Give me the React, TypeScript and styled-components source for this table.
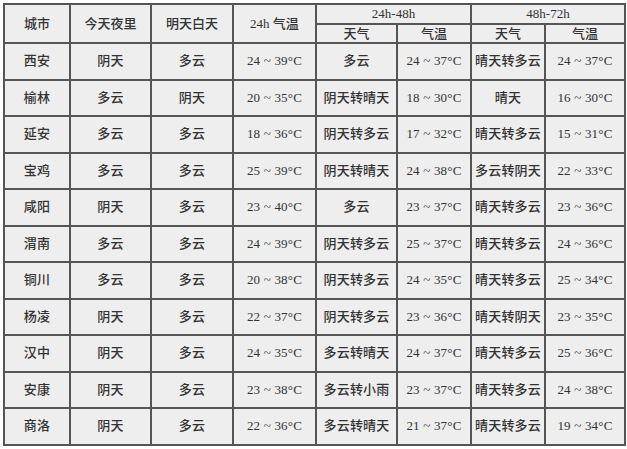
import React from 'react';
import styled, {createGlobalStyle} from 'styled-components';

const GlobalStyle = createGlobalStyle`
	html, body {
		margin: 0;
		padding: 0;
		background: #ffffff;
	}
`;

const Page = styled.div`
	padding: 3px 0 0 3px;
	width: 627px;
	height: 449px;
	box-sizing: border-box;
	background: #ffffff;
`;

const Table = styled.table`
	border-collapse: collapse;
	table-layout: fixed;
	width: 621px;
	background: #eeeeee;
	font-family: "Liberation Serif", "Noto Sans CJK SC", serif;
	font-size: 13px;
	font-weight: 500;
	color: #333333;
`;

const HeadRow = styled.tr<{ $h: number }>`
	height: ${({ $h }) => $h}px;
`;

const Row = styled.tr`
	height: 36.5px;
`;

const HeadCell = styled.th`
	border: 2px solid #555555;
	font-weight: 500;
	text-align: center;
	vertical-align: middle;
	padding: 0;
	line-height: 16px;
`;

const Cell = styled.td`
	border: 2px solid #555555;
	text-align: center;
	vertical-align: middle;
	padding: 0;
	line-height: 16px;
	letter-spacing: 0.2px;
`;

const widths = [66, 81, 82, 83, 81, 74, 74, 80];

const rows: string[][] = [
	['西安', '阴天', '多云', '24 ~ 39°C', '多云', '24 ~ 37°C', '晴天转多云', '24 ~ 37°C'],
	['榆林', '多云', '阴天', '20 ~ 35°C', '阴天转晴天', '18 ~ 30°C', '晴天', '16 ~ 30°C'],
	['延安', '多云', '多云', '18 ~ 36°C', '阴天转多云', '17 ~ 32°C', '晴天转多云', '15 ~ 31°C'],
	['宝鸡', '多云', '多云', '25 ~ 39°C', '阴天转晴天', '24 ~ 38°C', '多云转阴天', '22 ~ 33°C'],
	['咸阳', '阴天', '多云', '23 ~ 40°C', '多云', '23 ~ 37°C', '晴天转多云', '23 ~ 36°C'],
	['渭南', '多云', '多云', '24 ~ 39°C', '阴天转多云', '25 ~ 37°C', '晴天转多云', '24 ~ 36°C'],
	['铜川', '多云', '多云', '20 ~ 38°C', '阴天转多云', '24 ~ 35°C', '晴天转多云', '25 ~ 34°C'],
	['杨凌', '阴天', '多云', '22 ~ 37°C', '阴天转多云', '23 ~ 36°C', '晴天转阴天', '23 ~ 35°C'],
	['汉中', '阴天', '多云', '24 ~ 35°C', '多云转晴天', '24 ~ 37°C', '晴天转多云', '25 ~ 36°C'],
	['安康', '阴天', '多云', '23 ~ 38°C', '多云转小雨', '23 ~ 37°C', '晴天转多云', '24 ~ 38°C'],
	['商洛', '阴天', '多云', '22 ~ 36°C', '多云转晴天', '21 ~ 37°C', '晴天转多云', '19 ~ 34°C'],
];

export default function App() {
	return (
		<Page>
			<GlobalStyle />
			<Table>
				<colgroup>
					{widths.map((w, i) => <col key={i} style={{width: w}} />)}
				</colgroup>
				<thead>
					<HeadRow $h={20}>
						<HeadCell rowSpan={2}>城市</HeadCell>
						<HeadCell rowSpan={2}>今天夜里</HeadCell>
						<HeadCell rowSpan={2}>明天白天</HeadCell>
						<HeadCell rowSpan={2}>24h 气温</HeadCell>
						<HeadCell colSpan={2}>24h-48h</HeadCell>
						<HeadCell colSpan={2}>48h-72h</HeadCell>
					</HeadRow>
					<HeadRow $h={19}>
						<HeadCell>天气</HeadCell>
						<HeadCell>气温</HeadCell>
						<HeadCell>天气</HeadCell>
						<HeadCell>气温</HeadCell>
					</HeadRow>
				</thead>
				<tbody>
					{rows.map((r) => (
						<Row key={r[0]}>
							{r.map((c, i) => <Cell key={i}>{c}</Cell>)}
						</Row>
					))}
				</tbody>
			</Table>
		</Page>
	);
}
